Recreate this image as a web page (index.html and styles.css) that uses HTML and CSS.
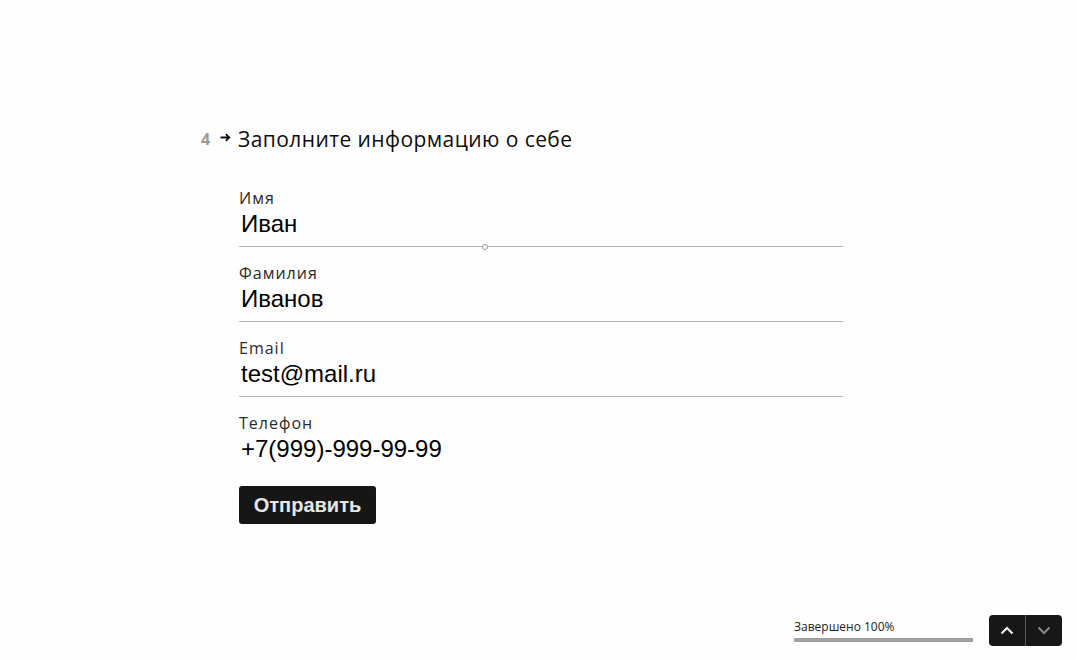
FILE: index.html
```html
<!DOCTYPE html>
<html lang="ru">
<head>
<meta charset="utf-8">
<title>Форма</title>
<link rel="stylesheet" href="styles.css">
</head>
<body>
<div class="page">
  <main class="main">
    <h1 class="title">
      <span class="num">4</span>
      <svg class="arrow" width="11" height="9" viewBox="0 0 11 9"><path d="M0.5 4.5H9M5.8 1.2L9.3 4.5L5.8 7.8" fill="none" stroke="#111" stroke-width="1.8"/></svg>
      <span class="title-text">Заполните информацию о себе</span>
    </h1>
    <form class="form">
      <div class="field">
        <label class="label">Имя</label>
        <div class="value">Иван</div>
        <span class="handle"></span>
      </div>
      <div class="field">
        <label class="label">Фамилия</label>
        <div class="value">Иванов</div>
      </div>
      <div class="field">
        <label class="label">Email</label>
        <div class="value">test@mail.ru</div>
      </div>
      <div class="field field-last">
        <label class="label">Телефон</label>
        <div class="value">+7(999)-999-99-99</div>
      </div>
      <button type="button" class="submit">Отправить</button>
    </form>
  </main>
  <footer class="footer">
    <div class="progress">
      <div class="progress-text">Завершено 100%</div>
      <div class="progress-bar"></div>
    </div>
    <div class="nav">
      <button type="button" class="nav-btn"><svg width="14" height="9" viewBox="0 0 14 9"><path d="M1.5 7.5L7 2L12.5 7.5" fill="none" stroke="#fff" stroke-width="2"/></svg></button>
      <span class="nav-sep"></span>
      <button type="button" class="nav-btn"><svg width="14" height="9" viewBox="0 0 14 9"><path d="M1.5 1.5L7 7L12.5 1.5" fill="none" stroke="#8a8a8a" stroke-width="2"/></svg></button>
    </div>
  </footer>
</div>
</body>
</html>
```

FILE: styles.css
```css
html, body {
  margin: 0;
  padding: 0;
  background: #fefefe;
}
.page {
  min-height: 100vh;
  display: flex;
  flex-direction: column;
  box-sizing: border-box;
}
.main {
  padding-top: 124px;
  padding-left: 201px;
}
.title {
  margin: 0;
  display: flex;
  align-items: center;
  font-family: "Open Sans", sans-serif;
  font-weight: 400;
  font-size: 21px;
  line-height: 30px;
  color: #0d0d0d;
  letter-spacing: 0.42px;
}
.num {
  font-size: 16px;
  font-weight: 700;
  color: #9a9a9a;
  width: 19px;
  letter-spacing: 0;
}
.arrow {
  margin-right: 7px;
  margin-top: -4px;
}
.form {
  padding-left: 38px;
  width: 604px;
  margin-top: 34px;
  display: flex;
  flex-direction: column;
  align-items: flex-start;
}
.field {
  position: relative;
  width: 100%;
  border-bottom: 1px solid #b5b5b5;
  padding-bottom: 7px;
  margin-bottom: 16px;
}
.field-last {
  border-bottom: none;
  margin-bottom: 15px;
}
.label {
  display: block;
  font-family: "Open Sans", sans-serif;
  font-size: 16px;
  line-height: 20px;
  letter-spacing: 1px;
  color: #2a2a2a;
}
.value {
  font-family: "Liberation Sans", Arial, sans-serif;
  font-size: 24px;
  line-height: 30px;
  padding-top: 1px;
  color: #000;
  padding-left: 2px;
}
.handle {
  position: absolute;
  left: 243px;
  bottom: -4px;
  width: 4px;
  height: 4px;
  border: 1px solid #999;
  border-radius: 50%;
  background: #fff;
}
.submit {
  font-family: "Liberation Sans", Arial, sans-serif;
  font-weight: 700;
  font-size: 20px;
  color: #e6e6e6;
  background: #161616;
  border: none;
  border-radius: 3px;
  height: 38px;
  width: 137px;
  padding: 0;
  cursor: pointer;
}
.footer {
  margin-top: auto;
  display: flex;
  justify-content: flex-end;
  align-items: center;
  gap: 16px;
  padding: 0 15px 15px 0;
}
.progress {
  width: 179px;
}
.progress-text {
  font-family: "Open Sans", sans-serif;
  font-size: 12px;
  line-height: 16px;
  color: #222;
  margin-bottom: 3px;
}
.progress-bar {
  height: 4px;
  background: #a0a0a0;
}
.nav {
  display: flex;
  align-items: stretch;
  height: 31px;
  background: #171717;
  border-radius: 4px;
}
.nav-btn {
  width: 36px;
  border: none;
  background: transparent;
  padding: 0;
  display: flex;
  align-items: center;
  justify-content: center;
}
.nav-sep {
  width: 1px;
  background: #5a5a5a;
}
```
